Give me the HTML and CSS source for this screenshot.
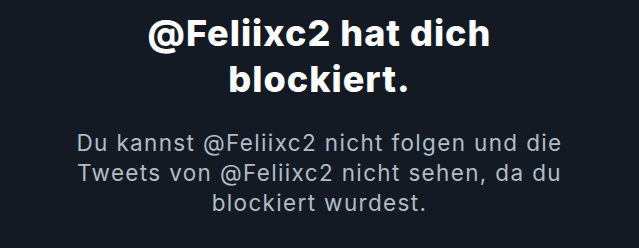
FILE: index.html
```html
<!DOCTYPE html>
<html lang="de">
<head>
<meta charset="utf-8">
<link rel="stylesheet" href="styles.css">
</head>
<body>
<main class="blocked">
  <h1 class="blocked-title">@Feliixc2 hat dich blockiert.</h1>
  <p class="blocked-text">Du kannst @Feliixc2 nicht folgen und die Tweets von @Feliixc2 nicht sehen, da du blockiert wurdest.</p>
</main>
</body>
</html>
```
FILE: styles.css
```css
html, body {
  margin: 0;
  padding: 0;
  background: #141a23;
  height: 100%;
}
body {
  font-family: Inter, "Noto Sans", sans-serif;
}
.blocked {
  display: flex;
  flex-direction: column;
  align-items: center;
  padding: 10px 40px 0;
  text-align: center;
}
.blocked-title {
  margin: 0;
  width: 420px;
  color: #ffffff;
  font-size: 36px;
  font-weight: 800;
  line-height: 46px;
  letter-spacing: 1px;
}
.blocked-text {
  margin: 26px 0 0;
  width: 520px;
  color: #b1bcc7;
  font-size: 22.5px;
  font-weight: 400;
  line-height: 30px;
  letter-spacing: 1.35px;
}
```
